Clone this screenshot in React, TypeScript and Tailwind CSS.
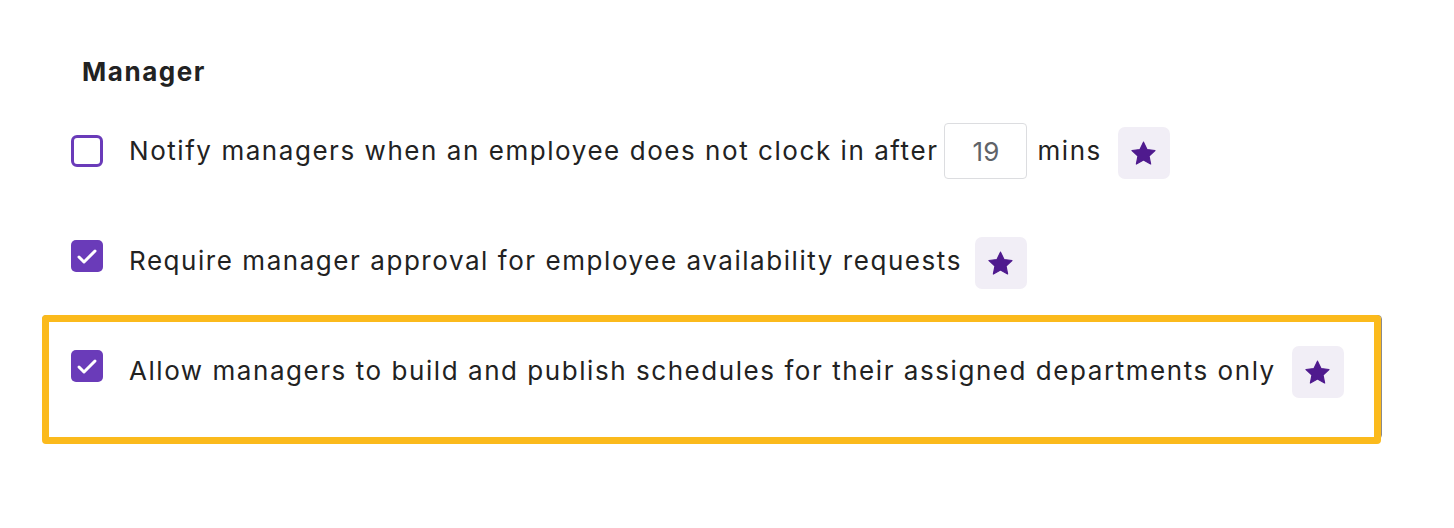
const StarIcon = () => (
  <svg viewBox="0 0 24 24" className="h-[29px] w-[29px]" fill="#4f1a8e">
    <path d="M12 2.6l2.9 6.1 6.6.8-4.9 4.6 1.3 6.6L12 17.4l-5.9 3.3 1.3-6.6-4.9-4.6 6.6-.8z" strokeLinejoin="round" stroke="#4f1a8e" strokeWidth="1" />
  </svg>
);

const StarButton = ({ className = "" }: { className?: string }) => (
  <button className={`flex h-[52px] w-[52px] shrink-0 items-center justify-center rounded-[7px] bg-[#f1eef6] ${className}`}>
    <StarIcon />
  </button>
);

const Checkbox = ({ checked, className = "" }: { checked: boolean; className?: string }) =>
  checked ? (
    <span className={`flex h-[32px] w-[32px] shrink-0 items-center justify-center rounded-[5px] bg-[#6a3bb9] ${className}`}>
      <svg viewBox="0 0 32 32" className="h-[32px] w-[32px]" fill="none" stroke="white" strokeWidth="3" strokeLinecap="round" strokeLinejoin="round">
        <path d="M8 17l5 5 11-11" />
      </svg>
    </span>
  ) : (
    <span className={`h-[32px] w-[32px] shrink-0 rounded-[6px] border-[3px] border-[#6a3bb9] bg-white ${className}`} />
  );

export default function App() {
  return (
    <div className="min-h-[528px] w-[1454px] bg-white font-['Inter',sans-serif] tracking-[1.55px] text-[#222]">
      <div className="px-[42px] pt-[54px]">
        <h2 className="pl-[40px] text-[26px] font-bold leading-[36px] text-[#222]">Manager</h2>

        {/* Notify row */}
        <div className="mt-[33px] flex h-[56px] items-center pl-[29px]">
          <Checkbox checked={false} />
          <span className="ml-[26px] text-[26px] leading-none">Notify managers when an employee does not clock in after</span>
          <input
            defaultValue="19"
            className="ml-[6px] h-[56px] w-[83px] rounded-[4px] border border-[#dcdde0] text-center text-[26px] tracking-normal text-[#5f6368] outline-none"
          />
          <span className="ml-[10px] text-[26px] leading-none">mins</span>
          <StarButton className="ml-[16px] mt-[4px]" />
        </div>

        {/* Approval row */}
        <div className="mt-[54px] flex h-[56px] items-center pl-[29px]">
          <Checkbox checked className="mb-[10px]" />
          <span className="ml-[26px] text-[26px] leading-none">Require manager approval for employee availability requests</span>
          <StarButton className="ml-[13px] mt-[4px]" />
        </div>

        {/* Highlighted row */}
        <div className="relative mt-[26px] w-[1340px]">
          <div className="mt-[7px] h-[124px] rounded-[4px] border border-[#8a8a8a]" />
          <div className="absolute left-0 top-0 h-[129px] w-[1339px] rounded-[4px] border-[7px] border-[#fbba1c] pl-[22px] pt-[23px]">
            <div className="flex h-[52px] items-center">
              <Checkbox checked className="mb-[10px]" />
              <span className="ml-[26px] text-[26px] leading-none">Allow managers to build and publish schedules for their assigned departments only</span>
              <StarButton className="ml-[16px] mt-[2px]" />
            </div>
          </div>
        </div>
      </div>
    </div>
  );
}
